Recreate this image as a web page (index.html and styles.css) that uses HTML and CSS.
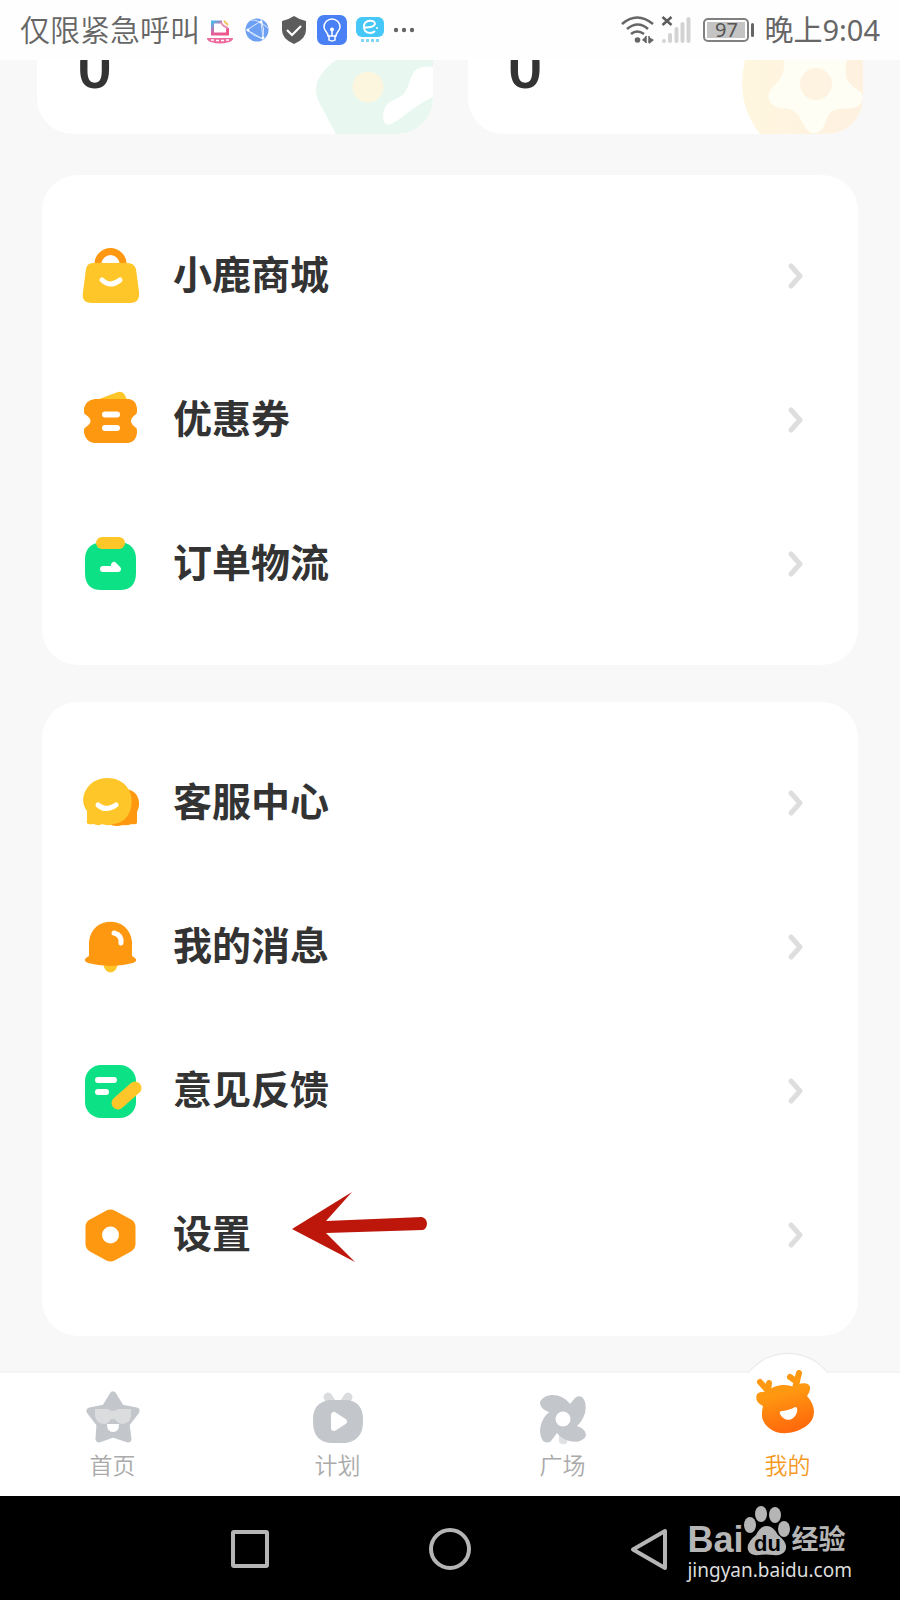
FILE: index.html
```html
<!DOCTYPE html>
<html lang="zh-CN">
<head>
    <meta charset="UTF-8">
    <meta name="viewport" content="width=device-width, initial-scale=1.0">
    <title>我的</title>
    <link rel="stylesheet" href="styles.css">
</head>
<body>
    <div class="app">
        <header class="status-bar">
            <div class="status-left">
                <span class="carrier">仅限紧急呼叫</span>
                <svg class="notice" width="28" height="30" viewBox="0 0 28 30">
                    <defs>
                        <linearGradient id="frame" x1="0" y1="0" x2="1" y2="1">
                            <stop offset="0" stop-color="#4db8f0"/>
                            <stop offset=".45" stop-color="#e0609c"/>
                            <stop offset="1" stop-color="#f0568a"/>
                        </linearGradient>
                    </defs>
                    <path d="M16 7H6.500v12h15v-6" fill="none" stroke="url(#frame)" stroke-width="3"/>
                    <path d="M15 7q1 4 7 6" fill="none" stroke="#e68fb5" stroke-width="2"/>
                    <path d="M18 6l4 4" stroke="#f7c15c" stroke-width="2"/>
                    <path d="M1 23h26q0 3-4 4-9 3-18 0-4-1-4-4z" fill="#ee6ba0"/>
                    <path d="M5 25h3M10 25.500h3M15 25.500h3M20 25h3" stroke="#fff" stroke-width="1.500"/>
                </svg>
                <svg class="notice" width="28" height="30" viewBox="0 0 28 30">
                    <circle cx="14" cy="15" r="11.500" fill="#6d9ff2"/>
                    <path d="M4 15L18 6l2 18zM18 4q4 10 2 20M4 15q6 6 16 9M8 5q7-1 17 8" fill="none" stroke="#dce9ff" stroke-width="1"/>
                    <circle cx="5" cy="15" r="1.500" fill="#fff"/>
                    <circle cx="18" cy="7" r="1.500" fill="#fff"/>
                    <circle cx="20" cy="23" r="1.500" fill="#fff"/>
                </svg>
                <svg class="notice" width="28" height="30" viewBox="0 0 28 30">
                    <path d="M14 1q6 4 12 5v9q0 9-12 14Q2 24 2 15V6q6-1 12-5z" fill="#5c5c5c"/>
                    <path d="M7 15l5 5 9-9" fill="none" stroke="#fff" stroke-width="2.200"/>
                </svg>
                <svg class="notice" width="30" height="30" viewBox="0 0 30 30">
                    <rect width="30" height="30" rx="7" fill="#4a80f5"/>
                    <path d="M11 21c0-4-4-5-4-9a8 8 0 0 1 16 0c0 4-4 5-4 9zM12 21v4q3 2 6 0v-4M15 15v6" fill="none" stroke="#fff" stroke-width="1.500"/>
                    <circle cx="15" cy="14.500" r="2" fill="#fff"/>
                </svg>
                <svg class="notice" width="28" height="30" viewBox="0 0 28 30">
                    <rect y="2" width="28" height="20" rx="6" fill="#45c8f7"/>
                    <path d="M9 12.500q9 0 10-3.500c0-4-9-5-11 1-1 5 2 8 6 8 2 0 4-1 5-2" fill="none" stroke="#fff" stroke-width="2"/>
                    <circle cx="21" cy="13" r="1" fill="#fff"/>
                    <path d="M5 25.500h3M10 25.500h3M15 25.500h3M20 25.500h3" stroke="#7fd6f7" stroke-width="3"/>
                </svg>
                <svg class="notice" width="22" height="30" viewBox="0 0 22 30" fill="#666">
                    <circle cx="3" cy="15" r="2.200"/>
                    <circle cx="11" cy="15" r="2.200"/>
                    <circle cx="19" cy="15" r="2.200"/>
                </svg>
            </div>
            <div class="status-right">
                <svg width="34" height="30" viewBox="0 0 34 30">
                    <g fill="none" stroke="#666" stroke-width="2.600">
                        <path d="M1 9q15-13 31 0"/>
                        <path d="M6 14q11-9 21 0"/>
                        <path d="M10 19q6-5 13 0"/>
                    </g>
                    <circle cx="16.500" cy="25" r="2.800" fill="#666"/>
                    <path d="M21 25l4-4v7zM33 25l-5 4v-7z" fill="#666"/>
                    <path d="M25 21v7M28 21v7" stroke="#666" stroke-width="1.500"/>
                </svg>
                <svg class="signal" width="30" height="30" viewBox="0 0 30 30">
                    <path d="M1.500 2l9 8M10.500 2l-9 8" stroke="#5c5c5c" stroke-width="2.500"/>
                    <g stroke="#d3d3d3" stroke-width="4" stroke-linecap="round">
                        <path d="M3 26v0M9 20v6M15.500 14v12M21.500 9v17M27.500 4v22"/>
                    </g>
                </svg>
                <span class="battery"><span class="battery-level">97</span></span>
                <time>晚上9:04</time>
            </div>
        </header>

        <main class="content">
            <div class="stats">
                <a href="#" class="stat">
                    <strong>0</strong>
                    <svg width="118" height="74" viewBox="0 0 118 74">
                        <path d="M21 0h97v74H21L3 40Q-1 30 3 20Q9 8 21 0z" fill="#e8f8f0"/>
                        <circle cx="53" cy="27" r="15.500" fill="#fcf6df"/>
                        <path d="M118 7Q100 4 96 17C91 33 91 34 79 40Q68 44 68 58Q70 68 78 63Q84 60 91 54Q105 43 118 37z" fill="#fff"/>
                    </svg>
                </a>
                <a href="#" class="stat">
                    <strong>0</strong>
                    <svg width="121" height="74" viewBox="0 0 121 74">
                        <defs>
                            <linearGradient id="wheel" x1="0" y1="0" x2="1" y2="0">
                                <stop offset=".1" stop-color="#fff6df"/>
                                <stop offset=".8" stop-color="#fef1e0"/>
                            </linearGradient>
                        </defs>
                        <path d="M3 0Q-7 42 18 74H121V0z" fill="url(#wheel)"/>
                        <path d="M42 0v6c0 8-4 14-10 20q-7 6-5 14 3 6 11 8c12 0 18 4 21 12l5 9q9 9 17-1l5-12q4-7 11-7l15-1q9-3 9-11l-2-5q-11-6-14-13-3-8 0-19z" fill="#fffef5"/>
                        <circle cx="74" cy="24" r="16" fill="#fef3e0"/>
                    </svg>
                </a>
            </div>

            <nav class="card">
                <a href="#" class="row">
                    <svg class="row-icon" width="60" height="60" viewBox="0 0 60 60">
                        <path d="M18 18a12.500 12.500 0 0 1 25 0" fill="none" stroke="#ff9811" stroke-width="7"/>
                        <path d="M13 17h35q6 0 8 6l3 23q1 11-9 11H12q-11 0-9-11l3-23q1-6 7-6z" fill="#fec629"/>
                        <path d="M22 34q8.500 8 18 0" fill="none" stroke="#fff" stroke-width="5" stroke-linecap="round"/>
                    </svg>
                    <span class="row-label">小鹿商城</span>
                    <svg class="chevron" width="16" height="28" viewBox="0 0 16 28"><path d="M3 4l9 10-9 10"/></svg>
                </a>
                <a href="#" class="row">
                    <svg class="row-icon" width="60" height="60" viewBox="0 0 60 60">
                        <path d="M19 9l19-7q6-2 9 8z" fill="#fec629"/>
                        <path d="M15 9h34q7 1 8 9v4q0 2-2 3-8 6 0 12 2 1 2 3v3q-1 9-9 10H14q-8-1-10-10v-3q0-2 2-3 9-6 0-12-2-1-2-3v-4q2-8 11-9z" fill="#ff9811"/>
                        <path d="M25 24.500h12M25 38h12" stroke="#fff" stroke-width="6" stroke-linecap="round"/>
                    </svg>
                    <span class="row-label">优惠券</span>
                    <svg class="chevron" width="16" height="28" viewBox="0 0 16 28"><path d="M3 4l9 10-9 10"/></svg>
                </a>
                <a href="#" class="row">
                    <svg class="row-icon" width="60" height="60" viewBox="0 0 60 60">
                        <path d="M20 8h22q14 3 14 17v14q0 17-16 17H21Q5 56 5 39V25Q5 11 20 8z" fill="#0ce285"/>
                        <rect x="16" y="3" width="29" height="12" rx="6" fill="#fec629"/>
                        <path d="M23 35h15l-4-4v4" fill="none" stroke="#fff" stroke-width="6" stroke-linecap="round" stroke-linejoin="round"/>
                    </svg>
                    <span class="row-label">订单物流</span>
                    <svg class="chevron" width="16" height="28" viewBox="0 0 16 28"><path d="M3 4l9 10-9 10"/></svg>
                </a>
            </nav>

            <nav class="card">
                <a href="#" class="row">
                    <svg class="row-icon" width="60" height="60" viewBox="0 0 60 60">
                        <path d="M40 17c16-4 23 11 17 22v9q1 4-5 3-6 2-9 1-6 2-12 0z" fill="#ff9811"/>
                        <path d="M27 5c33 0 31 45 6 46-4 2-8 1-11 0-3 2-6 1-8 0-6 1-8 0-7-4V38C-3 25 8 5 27 5z" fill="#fec629"/>
                        <path d="M18 32q8 7 18 0" fill="none" stroke="#fff" stroke-width="5" stroke-linecap="round"/>
                    </svg>
                    <span class="row-label">客服中心</span>
                    <svg class="chevron" width="16" height="28" viewBox="0 0 16 28"><path d="M3 4l9 10-9 10"/></svg>
                </a>
                <a href="#" class="row">
                    <svg class="row-icon" width="60" height="60" viewBox="0 0 60 60">
                        <path d="M23 45h15c-1 14-14 14-15 0z" fill="#fec629"/>
                        <path d="M9 39V25C11-2 50-2 52 25v14q8 4 1 7-22 6-45 0-7-3 1-7z" fill="#ff9811"/>
                        <path d="M34 16q8 2 7 10" fill="none" stroke="#fff" stroke-width="5" stroke-linecap="round"/>
                    </svg>
                    <span class="row-label">我的消息</span>
                    <svg class="chevron" width="16" height="28" viewBox="0 0 16 28"><path d="M3 4l9 10-9 10"/></svg>
                </a>
                <a href="#" class="row">
                    <svg class="row-icon" width="60" height="60" viewBox="0 0 60 60">
                        <rect x="5" y="4" width="51" height="53" rx="16" fill="#0ce285"/>
                        <path d="M18 19h16M18 31h8" stroke="#fff" stroke-width="6" stroke-linecap="round"/>
                        <path d="M38 42l17-15" stroke="#fec629" stroke-width="13" stroke-linecap="round"/>
                    </svg>
                    <span class="row-label">意见反馈</span>
                    <svg class="chevron" width="16" height="28" viewBox="0 0 16 28"><path d="M3 4l9 10-9 10"/></svg>
                </a>
                <a href="#" class="row">
                    <svg class="row-icon" width="60" height="60" viewBox="0 0 60 60">
                        <path d="M30.500 13L47 22v17L30.500 48 14 39V22z" fill="#ff9811" stroke="#ff9811" stroke-width="17" stroke-linejoin="round"/>
                        <circle cx="30.500" cy="30" r="8.500" fill="#fff"/>
                    </svg>
                    <span class="row-label">设置</span>
                    <svg class="pointer" width="140" height="72" viewBox="0 0 140 72">
                        <path d="M0 38L60 1 34 30l96-4a7 7 0 0 1 1 13L34 42 63 71z" fill="#bd170b"/>
                    </svg>
                    <svg class="chevron" width="16" height="28" viewBox="0 0 16 28"><path d="M3 4l9 10-9 10"/></svg>
                </a>
            </nav>
        </main>

        <nav class="tab-bar">
            <a href="#" class="tab">
                <svg width="64" height="64" viewBox="0 0 64 64">
                    <path d="M32 12l8 13 15 3-10 13 2 15-15-5-14 5 1-15L9 28l15-3z" fill="#c3c6cb" stroke="#c3c6cb" stroke-width="7" stroke-linejoin="round"/>
                    <path d="M14 26h13q5 4 10 0h13v8q-2 7-9 7-5-1-7-5h-4q-3 5-7 5-8-1-9-8z" fill="#dadcde"/>
                    <path d="M26 41h12q0 8-6 8t-6-8z" fill="#fff"/>
                </svg>
                <span>首页</span>
            </a>
            <a href="#" class="tab">
                <svg width="64" height="64" viewBox="0 0 64 64">
                    <path d="M22 14l3 5M42 14l-3 5" stroke="#dadcde" stroke-width="9" stroke-linecap="round"/>
                    <path d="M24 17h16q18 1 17 22 0 18-17 21H24Q7 58 7 39 6 19 24 17z" fill="#c3c6cb"/>
                    <path d="M28 32v13l10-6.500z" fill="#fff" stroke="#fff" stroke-width="6" stroke-linejoin="round"/>
                </svg>
                <span>计划</span>
            </a>
            <a href="#" class="tab">
                <svg width="64" height="64" viewBox="0 0 64 64">
                    <path d="M28 50h8v10q-5 3-8-1z" fill="#dfe1e3"/>
                    <path d="M18 29C13 27 9 25 9 19 14 9 31 10 39 21L44 15Q47 12 51 14C57 20 56 34 46 43 51 45 55 47 55 53 50 62 34 60 26 50L20 58Q17 61 12 58C7 51 8 38 18 29z" fill="#c3c6cb"/>
                    <circle cx="32" cy="36" r="7.500" fill="#fff"/>
                </svg>
                <span>广场</span>
            </a>
            <a href="#" class="tab tab-active" aria-current="page">
                <svg class="deer" width="64" height="72" viewBox="0 0 64 72">
                    <defs>
                        <linearGradient id="deer" x1="0" y1="0" x2=".3" y2="1">
                            <stop offset=".3" stop-color="#ff9811"/>
                            <stop offset="1" stop-color="#ff6b0c"/>
                        </linearGradient>
                    </defs>
                    <path d="M4 17l9 10M13 18l-1 8M34 12l7 5M43 8l-2 8-2 7" fill="none" stroke="#ff9811" stroke-width="6" stroke-linecap="round" stroke-linejoin="round"/>
                    <path d="M1 29Q4 26 11 27C17 20 29 18 38 22C42 18 50 17 53 20Q56 24 51 31C62 43 59 56 49 62C38 69 22 71 13 63C5 57 5 49 7 41Q-2 37 1 29z" fill="url(#deer)"/>
                    <path d="M26 46Q34 45 39 42Q42 42 41 47C38 57 28 57 24 49Q23 46 26 46z" fill="#fff"/>
                </svg>
                <span>我的</span>
            </a>
        </nav>

        <footer class="system-nav">
            <button type="button" aria-label="最近任务">
                <svg width="44" height="44" viewBox="0 0 44 44"><rect x="5" y="5" width="34" height="34" rx="1"/></svg>
            </button>
            <button type="button" aria-label="主屏幕">
                <svg width="44" height="44" viewBox="0 0 44 44"><circle cx="22" cy="22" r="19"/></svg>
            </button>
            <button type="button" aria-label="返回">
                <svg width="44" height="44" viewBox="0 0 44 44"><path d="M37 4v37L5 22.500z"/></svg>
            </button>
            <div class="watermark">
                <div class="brand">
                    <span>Bai</span>
                    <span class="paw">
                        <svg width="48" height="52" viewBox="0 0 48 52" fill="#b5b5b5">
                            <ellipse cx="7" cy="20" rx="6" ry="8"/>
                            <ellipse cx="18" cy="9" rx="6" ry="8"/>
                            <ellipse cx="32" cy="10" rx="6" ry="8"/>
                            <ellipse cx="41" cy="24" rx="6" ry="8"/>
                            <path d="M24 21q6 0 11 9c9 7 9 12 7 16q-3 5-12 4-7-1-14 0-9 1-11-5-2-7 8-15 4-9 11-9z"/>
                        </svg>
                        <span class="paw-text">du</span>
                    </span>
                    <span class="brand-cn">经验</span>
                </div>
                <div class="site">jingyan.baidu.com</div>
            </div>
        </footer>
    </div>
</body>
</html>
```

FILE: styles.css
```css
* {
    box-sizing: border-box;
}
body {
    margin: 0;
    background: #f8f8f8;
    font-family: "Noto Sans", "Noto Sans CJK SC", sans-serif;
    color: #333;
}
a {
    color: inherit;
    text-decoration: none;
}
svg {
    display: block;
    flex-shrink: 0;
}
.app {
    min-height: 100vh;
    display: flex;
    flex-direction: column;
}

/* 状态栏 */
.status-bar {
    height: 60px;
    padding: 0 20px;
    display: flex;
    justify-content: space-between;
    align-items: center;
    background: #fefefe;
    color: #666;
    font-size: 30px;
    line-height: 40px;
}
.status-left,
.status-right {
    display: flex;
    align-items: center;
}
.status-left {
    gap: 9px;
    font-weight: 350;
}
.carrier {
    margin-right: -3px;
}
.status-right time {
    margin-left: 10px;
    font-size: 29px;
}
.signal {
    margin: 0 12px 0 6px;
}
.battery {
    position: relative;
    width: 46px;
    height: 24px;
    padding: 2px;
    margin-right: 5px;
    border: 2px solid #808080;
    border-radius: 5px;
}
.battery::after {
    content: "";
    position: absolute;
    top: 3px;
    right: -7px;
    width: 3px;
    height: 14px;
    border-radius: 2px;
    background: #666;
}
.battery-level {
    display: block;
    height: 16px;
    background: #c4c4c4;
    color: #555;
    font-size: 20px;
    line-height: 16px;
    text-align: center;
}

/* 内容区 */
.content {
    flex: 1;
    padding-bottom: 37px;
}
.stats {
    display: flex;
    gap: 35px;
    padding: 0 37px;
    margin-bottom: 41px;
}
.stat {
    flex: 1;
    height: 74px;
    padding-left: 40px;
    display: flex;
    justify-content: space-between;
    align-items: flex-end;
    overflow: hidden;
    background: #fff;
    border-radius: 0 0 36px 36px;
}
.stat strong {
    padding-bottom: 37px;
    font-family: Roboto, sans-serif;
    font-size: 62px;
    font-weight: 500;
    line-height: 60px;
}
.card {
    margin: 0 42px 37px;
    padding: 29px 38px;
    background: #fff;
    border-radius: 36px;
}
.card:last-child {
    margin-bottom: 0;
}
.row {
    position: relative;
    display: flex;
    align-items: center;
    height: 144px;
}
.row-icon {
    margin-right: 33px;
    overflow: visible;
}
.row-label {
    padding-bottom: 8px;
    font-family: "Noto Sans CJK SC", sans-serif;
    font-size: 39px;
    font-weight: 700;
    line-height: 48px;
}
.chevron {
    margin-left: auto;
    margin-right: 16px;
    fill: none;
    stroke: #dedede;
    stroke-width: 5px;
    stroke-linecap: round;
    stroke-linejoin: round;
}
.pointer {
    position: absolute;
    left: 212px;
    top: 28px;
}

/* 底部标签栏 */
.tab-bar {
    display: flex;
    height: 123px;
    background: #fff;
    box-shadow: 0 -1px 2px #f0f0f0;
}
.tab {
    position: relative;
    flex: 1;
    display: flex;
    flex-direction: column;
    align-items: center;
    padding-top: 10px;
    color: #aaa;
    font-size: 23px;
    font-weight: 350;
    line-height: 36px;
}
.tab span {
    position: relative;
}
.tab-active {
    color: #f5991f;
}
.tab-active::before {
    content: "";
    position: absolute;
    top: -19px;
    left: 50%;
    width: 100px;
    height: 100px;
    margin-left: -50px;
    border-radius: 50%;
    background: #fff;
    box-shadow: 0 -1px 1px #e6e6e6;
}
/* 遮住圆形下半部分的阴影 */
.tab-active::after {
    content: "";
    position: absolute;
    inset: 0;
    background: #fff;
}
.tab-active span,
.tab-active .deer {
    z-index: 1;
}
.deer {
    position: relative;
    margin-top: -18px;
    margin-bottom: 10px;
    overflow: visible;
}

/* 系统导航 */
.system-nav {
    position: relative;
    display: flex;
    justify-content: center;
    align-items: center;
    gap: 156px;
    height: 105px;
    background: #000;
}
.system-nav button {
    padding: 0;
    border: 0;
    background: none;
}
.system-nav button svg {
    fill: none;
    stroke: #b5b5b5;
    stroke-width: 4px;
    stroke-linejoin: round;
}
.watermark {
    position: absolute;
    right: 48px;
    bottom: 18px;
    color: #b5b5b5;
}
.brand {
    display: flex;
    align-items: flex-end;
    font-family: "Liberation Sans", "Noto Sans CJK SC", sans-serif;
    font-size: 36px;
    font-weight: 700;
    line-height: 34px;
}
.paw {
    position: relative;
}
.paw-text {
    position: absolute;
    left: 0;
    right: 0;
    bottom: 0;
    color: #000;
    font-size: 22px;
    line-height: 26px;
    text-align: center;
}
.brand-cn {
    font-size: 27px;
}
.site {
    color: #ddd;
    font-size: 19px;
    line-height: 26px;
}
```
